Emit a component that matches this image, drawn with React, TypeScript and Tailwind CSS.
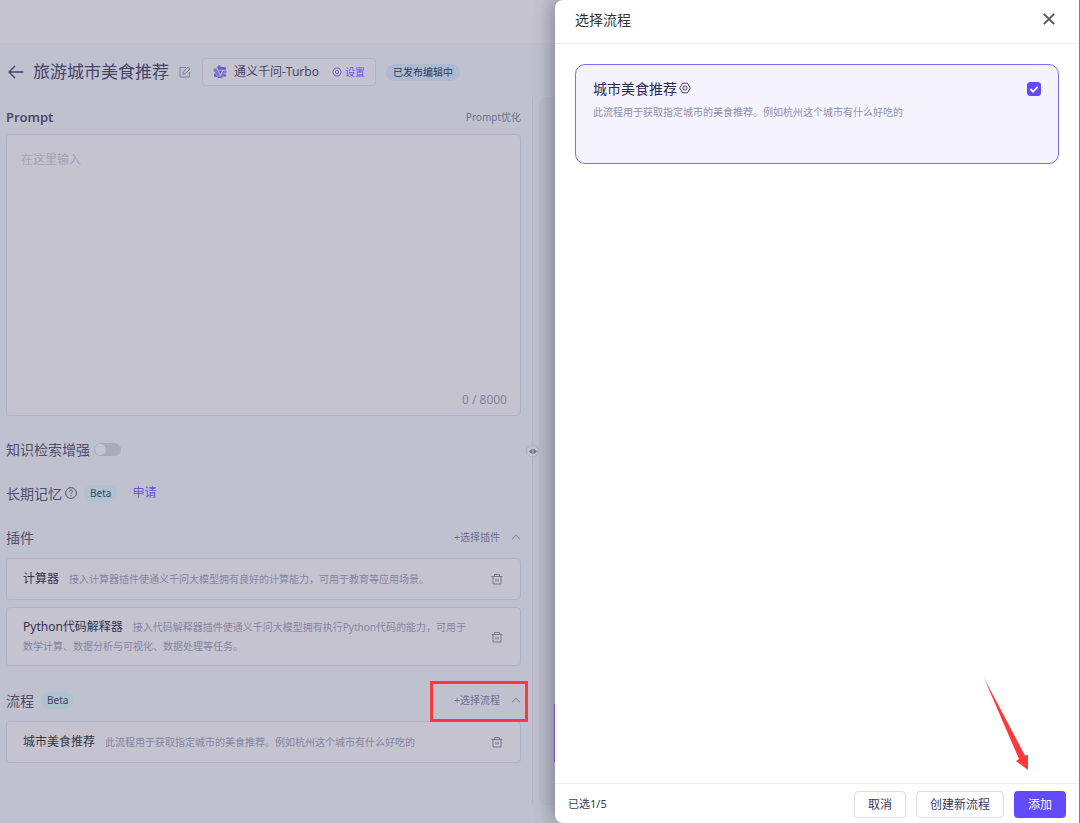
import React, { useState } from "react";

type IconProps = { className?: string };

function BackArrow({ className }: IconProps) {
  return (
    <svg viewBox="0 0 16 14" className={className} fill="none" stroke="currentColor" strokeWidth="1.4">
      <path d="M15.5 7H1M7 1 1 7l6 6" />
    </svg>
  );
}

function EditIcon({ className }: IconProps) {
  return (
    <svg viewBox="0 0 12 12" className={className} fill="none" stroke="currentColor" strokeWidth="1">
      <path d="M7 1.5H1v9.5h9.5V6" />
      <path d="M4 8.2l.3-2.2L9.2 1l1.9 1.8-4.9 5z" />
    </svg>
  );
}

function ModelLogo({ className }: IconProps) {
  return (
    <svg viewBox="0 0 14 14" className={className} fill="currentColor">
      <path d="M5.2.6h1.9l.8 1.5h4.6l.8 1.5-.7 1.2H5.4L4 2.6z" />
      <path d="M3.3 3.2 6.9 9.8l-.8 1.4H4.3L1.6 6.4H.9L.2 5l.9-1.6z" opacity=".75" />
      <path d="M1.9 7.4 4 11.6h3l.8 1.4H5.2L4.4 12H1.7L.9 10.6z" />
      <path d="m13.1 5.6.7 1.5-.9 1.5h-1.4l-2.6 4.6H7.3l-.6-1.2 3.9-6.4z" opacity=".75" />
      <path d="M10.9 9.4h2l.3 1.1-.8 1.3h-2.8z" />
      <path d="M5.2 5.6h3.9L7.2 8.9z" />
    </svg>
  );
}

function HexSettings({ className }: IconProps) {
  return (
    <svg viewBox="0 0 12 12" className={className} fill="none" stroke="currentColor" strokeWidth="1">
      <path d="M3.6 1.2h4.8L11.3 6l-2.9 4.8H3.6L.7 6z" strokeLinejoin="round" />
      <circle cx="6" cy="6" r="2" />
    </svg>
  );
}

function HelpIcon({ className }: IconProps) {
  return (
    <svg viewBox="0 0 12 12" className={className} fill="none" stroke="currentColor" strokeWidth="1">
      <circle cx="6" cy="6" r="5.4" />
      <path d="M4.4 4.8c0-1 .7-1.6 1.6-1.6s1.6.6 1.6 1.4c0 1.1-1.6 1.2-1.6 2.4M6 8v1.1" />
    </svg>
  );
}

function TrashIcon({ className }: IconProps) {
  return (
    <svg viewBox="0 0 12 12" className={className} fill="none" stroke="currentColor" strokeWidth="1">
      <path d="M.5 3.5h11M2 3.5v7.5h8V3.5M3.5 3.5v-2h5v2M5 6v2.5M7 6v2.5" />
    </svg>
  );
}

function ChevronUp({ className }: IconProps) {
  return (
    <svg viewBox="0 0 10 6" className={className} fill="none" stroke="currentColor" strokeWidth="1.1">
      <path d="M1 5.3 5 1l4 4.3" />
    </svg>
  );
}

function BetaTag() {
  return (
    <span className="flex h-[17px] items-center rounded-full bg-[#aec2d0] px-[6px] text-[10px] text-[#3f4560]">
      Beta
    </span>
  );
}

function PickButton({ label }: { label: string }) {
  return (
    <button type="button" className="flex items-center gap-[11px] text-[10px] text-[#70708f]">
      {label}
      <ChevronUp className="h-[6px] w-[10px] text-[#8a8aa3]" />
    </button>
  );
}

function ItemCard({ name, desc }: { name: string; desc: string }) {
  return (
    <li className="flex min-h-[42px] items-center justify-between rounded border border-[#b3b2c5] bg-[#c5c3d0] py-[9px] pr-[17px] pl-[16px]">
      <p className="max-w-[452px] text-[10px] leading-[19px] text-[#8585a3]">
        <span className="mr-[10px] text-[12px] text-[#34344a]">{name}</span>
        {desc}
      </p>
      <button type="button" aria-label={`删除${name}`} className="text-[#77778f]">
        <TrashIcon className="size-[12px]" />
      </button>
    </li>
  );
}

function Editor() {
  const [prompt, setPrompt] = useState("");
  return (
    <main className="flex min-w-0 flex-1 flex-col bg-[#bfc1cf]">
      <div className="h-[43px] shrink-0 bg-[#c5c3d0]" />
      <header className="flex h-[54px] items-center pt-[4px] pl-[8px]">
        <button type="button" aria-label="返回" className="text-[#45436a]">
          <BackArrow className="h-[14px] w-[16px]" />
        </button>
        <h1 className="ml-[9px] text-[17px] text-[#45436a]">旅游城市美食推荐</h1>
        <button type="button" aria-label="编辑名称" className="ml-[10px] text-[#8080a0]">
          <EditIcon className="size-[12px]" />
        </button>
        <div className="ml-[11px] flex h-[28px] items-center rounded border border-[#b3b2c5] bg-[#c5c3d0] px-[10px]">
          <ModelLogo className="size-[14px] text-[#6a5bd0]" />
          <span className="ml-[7px] text-[12px] text-[#45436a]">通义千问-Turbo</span>
          <button type="button" className="ml-[13px] flex items-center gap-[3px] text-[10px] text-[#6a55d8]">
            <HexSettings className="size-[10px]" />
            设置
          </button>
        </div>
        <span className="ml-[10px] flex h-[17px] items-center rounded-full bg-[#adbad2] px-[7px] text-[10px] text-[#34384e]">
          已发布编辑中
        </span>
      </header>

      <div className="flex flex-1">
        <div className="min-w-0 flex-1 pr-[11px] pl-[6px]">
          <div className="flex h-[37px] items-center justify-between pt-[4px]">
            <label htmlFor="prompt" className="text-[13px] font-semibold text-[#4b4968]">
              Prompt
            </label>
            <button type="button" className="text-[10px] text-[#70708f]">
              Prompt优化
            </button>
          </div>
          <div className="flex h-[282px] flex-col rounded border border-[#b3b2c5] bg-[#c5c3d0]">
            <textarea
              id="prompt"
              value={prompt}
              onChange={(e) => setPrompt(e.target.value)}
              placeholder="在这里输入"
              className="w-full flex-1 resize-none bg-transparent px-[14px] pt-[16px] text-[12px] leading-[18px] text-[#45436a] outline-none placeholder:text-[#a3a2b8]"
            />
            <div className="px-[13px] pb-[6px] text-right text-[12px] leading-[18px] text-[#84849f]">
              {prompt.length} / 8000
            </div>
          </div>

          <div className="mt-[23px] flex h-[20px] items-center">
            <h2 id="rag" className="text-[14px] text-[#504e70]">
              知识检索增强
            </h2>
            <button
              type="button"
              role="switch"
              aria-checked="false"
              aria-labelledby="rag"
              className="ml-[4px] flex h-[13px] w-[27px] items-center rounded-full bg-[#aaa9c0] px-px"
            >
              <span className="size-[11px] rounded-full bg-[#c5c3d0]" />
            </button>
          </div>

          <div className="mt-[24px] flex h-[20px] items-center">
            <h2 className="text-[14px] text-[#504e70]">长期记忆</h2>
            <HelpIcon className="mr-[7px] ml-[3px] size-[12px] text-[#504e70]" />
            <BetaTag />
            <a href="#apply" className="ml-[15px] text-[12px] text-[#6a55d8]">
              申请
            </a>
          </div>

          <section className="mt-[24px]">
            <div className="flex h-[20px] items-center justify-between">
              <h2 className="text-[14px] text-[#504e70]">插件</h2>
              <PickButton label="+选择插件" />
            </div>
            <ul className="mt-[11px] flex flex-col gap-[7px]">
              <ItemCard name="计算器" desc="接入计算器插件使通义千问大模型拥有良好的计算能力，可用于教育等应用场景。" />
              <ItemCard
                name="Python代码解释器"
                desc="接入代码解释器插件使通义千问大模型拥有执行Python代码的能力，可用于数学计算、数据分析与可视化、数据处理等任务。"
              />
            </ul>
          </section>

          <section className="mt-[24px]">
            <div className="relative flex h-[20px] items-center justify-between">
              <div className="flex items-center gap-[7px]">
                <h2 className="text-[14px] text-[#504e70]">流程</h2>
                <BetaTag />
              </div>
              <PickButton label="+选择流程" />
              <div className="pointer-events-none absolute -top-[9px] -right-[7px] h-[41px] w-[98px] border-3 border-[#fb3b38]" />
            </div>
            <ul className="mt-[11px]">
              <ItemCard name="城市美食推荐" desc="此流程用于获取指定城市的美食推荐。例如杭州这个城市有什么好吃的" />
            </ul>
          </section>
        </div>

        <div className="relative mb-[18px] w-px bg-[#b5b5c6]">
          <button
            type="button"
            aria-label="调整宽度"
            className="absolute top-1/2 -left-[6px] flex size-[13px] -translate-y-1/2 items-center justify-center rounded-full border border-[#aeaec2] bg-[#c5c3d0] text-[#72728f]"
          >
            <svg viewBox="0 0 8 6" className="h-[6px] w-[8px] shrink-0" fill="currentColor">
              <path d="M3.5 0v6L0 3zM4.5 0v6L8 3z" />
            </svg>
          </button>
        </div>
        <div className="mb-[18px] ml-[6px] w-[16px] rounded-l-lg bg-[#bbbccb]" />
      </div>
    </main>
  );
}

function FlowDrawer() {
  const [checked, setChecked] = useState(true);
  return (
    <aside
      role="dialog"
      aria-labelledby="drawer-title"
      className="sticky top-0 flex h-screen w-[525px] shrink-0 flex-col rounded-l-lg border-r border-[#808080] bg-white shadow-[-4px_0_18px_rgba(70,65,90,0.45)]"
    >
      <header className="flex h-[44px] shrink-0 items-center justify-between border-b border-[#eeeeee] pr-[24px] pb-[5px] pl-[20px]">
        <h2 id="drawer-title" className="text-[14px] text-[#333333]">
          选择流程
        </h2>
        <button type="button" aria-label="关闭" className="text-[#555555]">
          <svg viewBox="0 0 12 12" className="size-[12px]" fill="none" stroke="currentColor" strokeWidth="1.8">
            <path d="m.8.8 10.4 10.4M11.2.8.8 11.2" />
          </svg>
        </button>
      </header>

      <div className="flex-1 px-[20px] pt-[20px]">
        <label className="flex h-[100px] items-start justify-between rounded-[10px] border border-[#806bf8] bg-[#f5f3fe] px-[17px] pt-[13px]">
          <span className="block">
            <span className="flex h-[20px] items-center gap-[2px] text-[14px] text-[#2c2850]">
              城市美食推荐
              <HexSettings className="size-[12px] text-[#45436a]" />
            </span>
            <span className="mt-[6px] block text-[10px] leading-[16px] text-[#8f8fb0]">
              此流程用于获取指定城市的美食推荐。例如杭州这个城市有什么好吃的
            </span>
          </span>
          <span className="mt-[4px] grid">
            <input
              type="checkbox"
              checked={checked}
              onChange={(e) => setChecked(e.target.checked)}
              className="peer col-start-1 row-start-1 size-[14px] appearance-none rounded-[3px] border border-[#624aff] bg-white checked:bg-[#624aff]"
            />
            <svg
              viewBox="0 0 14 14"
              className="pointer-events-none invisible col-start-1 row-start-1 size-[14px] peer-checked:visible"
              fill="none"
              stroke="white"
              strokeWidth="1.8"
            >
              <path d="m3.4 7 2.7 2.7 4.6-4.8" />
            </svg>
          </span>
        </label>
      </div>

      <footer className="flex h-[40px] shrink-0 items-center gap-[10px] border-t border-[#eeeeee] px-[13px] pt-[2px] text-[12px] text-[#3b3860]">
        <span className="mr-auto text-[11px]">已选1/5</span>
        <button type="button" className="h-[27px] rounded border border-[#dcdbe8] px-[13px]">
          取消
        </button>
        <button type="button" className="h-[27px] rounded border border-[#dcdbe8] px-[13px]">
          创建新流程
        </button>
        <button type="button" className="h-[27px] rounded bg-[#624aff] px-[14px] text-white">
          添加
        </button>
      </footer>

      <svg viewBox="0 0 44 92" className="pointer-events-none absolute right-[51px] bottom-[53px] h-[92px] w-[44px]" fill="#fd3a37">
        <path d="M0 0 41 77.5 44 77v15L32 83l3-2z" />
      </svg>
      <div className="absolute bottom-[61px] -left-px h-[58px] w-px bg-[#8350b8]" />
    </aside>
  );
}

export default function App() {
  return (
    <div className="flex min-h-screen bg-[#bfc1cf] font-['Noto_Sans','Noto_Sans_CJK_SC',sans-serif]">
      <Editor />
      <FlowDrawer />
    </div>
  );
}
